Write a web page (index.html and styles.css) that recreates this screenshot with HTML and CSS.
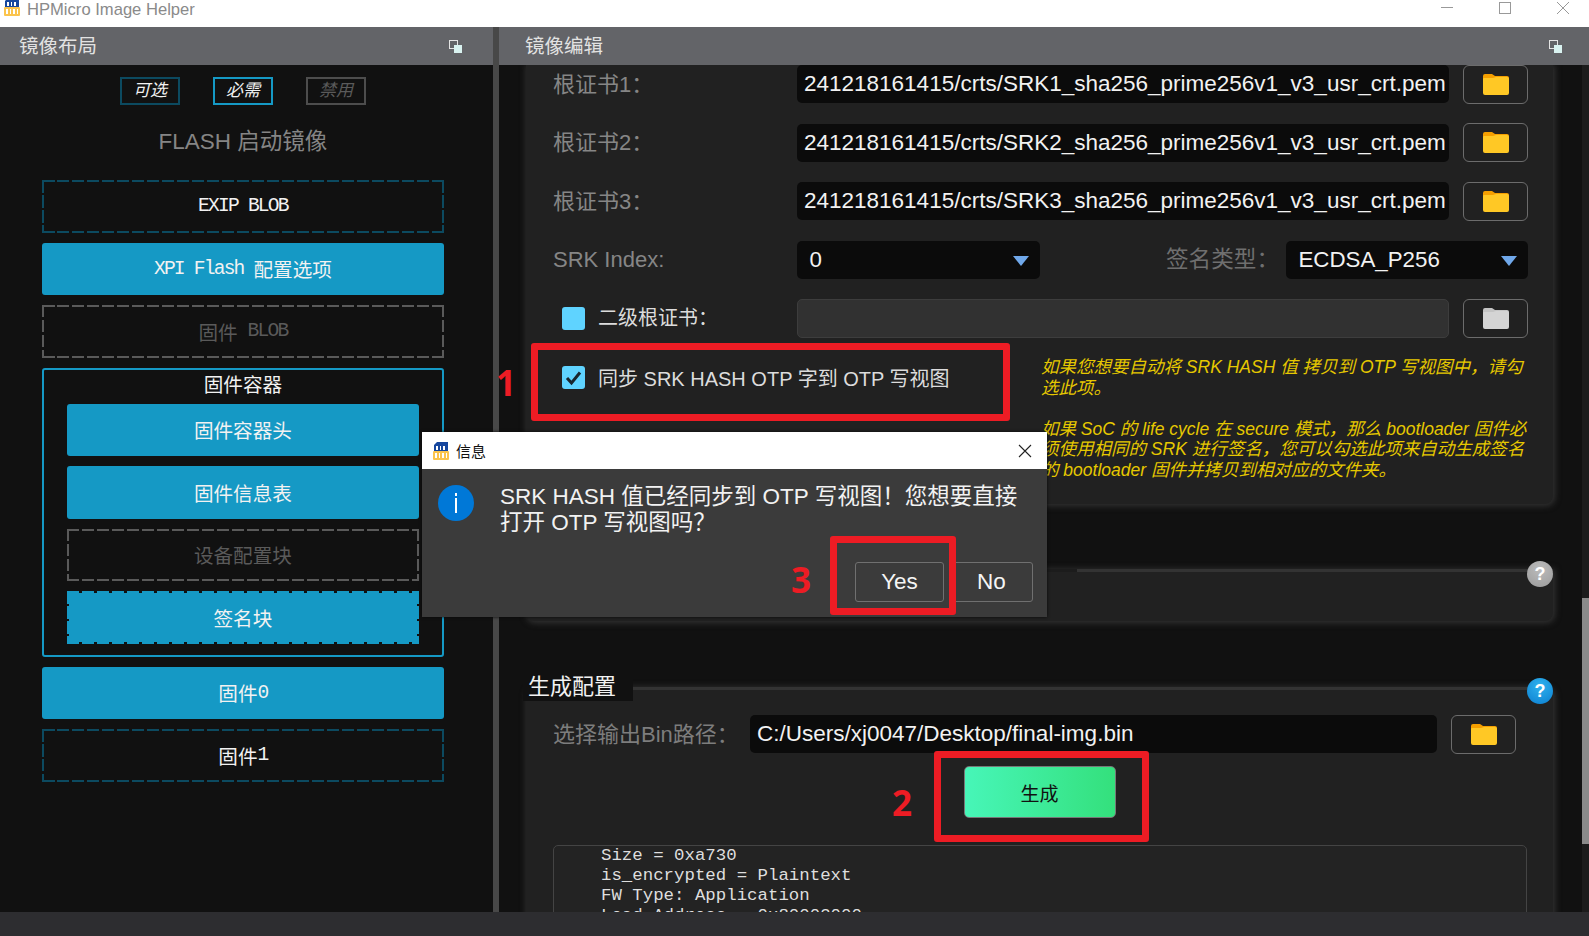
FILE: index.html
```html
<!DOCTYPE html>
<html lang="zh-CN">
<head>
    <meta charset="UTF-8">
    <meta name="viewport" content="width=device-width, initial-scale=1.0">
    <title>HPMicro Image Helper</title>
    <link rel="stylesheet" href="styles.css">
</head>
<body>
    <svg class="defs" width="0" height="0">
        <symbol id="folder" viewBox="0 0 26 21">
            <path fill="var(--folder-tab)" d="M0 2a2 2 0 0 1 2-2h7l3 2h12a2 2 0 0 1 2 2v8H0z"/>
            <path fill="var(--folder-body)" d="M0 5a1 1 0 0 1 1-1h9l3-1h11a2 2 0 0 1 2 2v14a2 2 0 0 1-2 2H2a2 2 0 0 1-2-2z"/>
        </symbol>
        <symbol id="app-logo" viewBox="0 0 16 18">
            <path fill="#17479e" d="M1 9V3l3-3h11v9z"/>
            <path fill="#fff" d="M3 4h2v4H3zm4 0h1v4H7zm3 0h2v4h-2z"/>
            <rect x="0" y="9" width="16" height="9" rx="1" fill="#fbc44d"/>
            <path fill="#fff" d="M2 11h2v5H2zm4 0h1v5H6zm3 0h2v5H9zm4 0h1v5h-1z"/>
        </symbol>
        <symbol id="float-icon" viewBox="0 0 13 13">
            <rect x="0.5" y="0.5" width="8" height="8" fill="none" stroke="#e4e4e4"/>
            <rect x="5" y="5" width="8" height="8" fill="#d9f2f0"/>
        </symbol>
        <symbol id="check" viewBox="0 0 23 23">
            <path fill="none" stroke="#18262e" stroke-width="3" d="M5 12l4.500 5L18 6.500"/>
        </symbol>
    </svg>

    <header class="titlebar">
        <svg class="app-logo"><use href="#app-logo"/></svg>
        <span class="app-name">HPMicro Image Helper</span>
        <div class="window-controls">
            <svg width="12" height="14" viewBox="0 0 12 14"><path d="M0 5.500h12" stroke="#999"/></svg>
            <svg width="12" height="14" viewBox="0 0 12 14"><rect x="0.500" y="0.500" width="11" height="11" fill="none" stroke="#999"/></svg>
            <svg width="12" height="14" viewBox="0 0 12 14"><path d="M0 0l12 12M12 0L0 12" stroke="#999"/></svg>
        </div>
    </header>

    <main class="workspace">
        <section class="layout-panel">
            <div class="panel-header">
                <span class="panel-title">镜像布局</span>
                <svg class="float-icon"><use href="#float-icon"/></svg>
            </div>
            <div class="layout-body">
                <div class="legend">
                    <span class="legend-item optional">可选</span>
                    <span class="legend-item required">必需</span>
                    <span class="legend-item disabled">禁用</span>
                </div>
                <h2 class="image-title">FLASH 启动镜像</h2>
                <div class="block-list">
                    <div class="block dashed"><span class="latin">EXIP BLOB</span></div>
                    <div class="block solid"><span class="latin">XPI Flash </span>配置选项</div>
                    <div class="block dashed off">固件<span class="latin"> BLOB</span></div>
                    <div class="container-block">
                        <div class="container-title">固件容器</div>
                        <div class="block-list">
                            <div class="block solid">固件容器头</div>
                            <div class="block solid">固件信息表</div>
                            <div class="block dashed off">设备配置块</div>
                            <div class="block dashed filled">签名块</div>
                        </div>
                    </div>
                    <div class="block solid">固件<span class="latin">0</span></div>
                    <div class="block dashed">固件<span class="latin">1</span></div>
                </div>
            </div>
        </section>

        <div class="splitter"></div>

        <section class="edit-panel">
            <div class="panel-header">
                <span class="panel-title">镜像编辑</span>
                <svg class="float-icon"><use href="#float-icon"/></svg>
            </div>
            <div class="edit-body">
                <div class="edit-scroll">
                    <div class="card srk-card">
                        <div class="row">
                            <label class="row-label">根证书1：</label>
                            <div class="field">241218161415/crts/SRK1_sha256_prime256v1_v3_usr_crt.pem</div>
                            <button class="folder-btn"><svg><use href="#folder"/></svg></button>
                        </div>
                        <div class="row">
                            <label class="row-label">根证书2：</label>
                            <div class="field">241218161415/crts/SRK2_sha256_prime256v1_v3_usr_crt.pem</div>
                            <button class="folder-btn"><svg><use href="#folder"/></svg></button>
                        </div>
                        <div class="row">
                            <label class="row-label">根证书3：</label>
                            <div class="field">241218161415/crts/SRK3_sha256_prime256v1_v3_usr_crt.pem</div>
                            <button class="folder-btn"><svg><use href="#folder"/></svg></button>
                        </div>
                        <div class="row">
                            <label class="row-label latin-label">SRK Index:</label>
                            <div class="combo srk-index">0</div>
                            <label class="sign-label">签名类型：</label>
                            <div class="combo sign-type">ECDSA_P256</div>
                        </div>
                        <div class="row">
                            <label class="row-label check-label"><span class="checkbox"></span>二级根证书：</label>
                            <div class="field field-off"></div>
                            <button class="folder-btn gray"><svg><use href="#folder"/></svg></button>
                        </div>
                        <div class="sync-row">
                            <label class="check-label sync-label">
                                <span class="checkbox"><svg><use href="#check"/></svg></span>同步 SRK HASH OTP 字到 OTP 写视图
                            </label>
                            <p class="note">如果您想要自动将 SRK HASH 值 拷贝到 OTP 写视图中，请勾<br>选此项。<br><br>如果 SoC 的 life cycle 在 secure 模式，那么 bootloader 固件必<br>须使用相同的 SRK 进行签名，您可以勾选此项来自动生成签名<br>的 bootloader 固件并拷贝到相对应的文件夹。</p>
                        </div>
                    </div>

                    <div class="card otp-card">
                        <span class="card-notch"></span>
                        <span class="help gray-help">?</span>
                    </div>

                    <div class="card output-card">
                        <h3 class="card-title">生成配置</h3>
                        <span class="help">?</span>
                        <div class="row output-row">
                            <label class="output-label">选择输出Bin路径：</label>
                            <div class="field">C:/Users/xj0047/Desktop/final-img.bin</div>
                            <button class="folder-btn"><svg><use href="#folder"/></svg></button>
                        </div>
                        <button class="generate-btn">生成</button>
                        <pre class="log">Size = 0xa730
is_encrypted = Plaintext
FW Type: Application
Load Address = 0x80003000</pre>
                    </div>
                </div>
                <div class="scrollbar"><div class="scroll-thumb"></div></div>
            </div>
        </section>
    </main>

    <footer class="statusbar"></footer>

    <!-- message box -->
    <div class="dialog">
        <div class="dialog-title">
            <svg class="dialog-logo"><use href="#app-logo"/></svg>
            <span>信息</span>
            <svg class="dialog-close" width="14" height="14" viewBox="0 0 14 14"><path d="M1 1l12 12M13 1L1 13" stroke="#222" stroke-width="1.100"/></svg>
        </div>
        <div class="dialog-body">
            <svg class="info-icon" width="36" height="36" viewBox="0 0 36 36">
                <circle cx="18" cy="18" r="18" fill="#0078d7"/>
                <rect x="17" y="8" width="2" height="3" fill="#fff"/>
                <rect x="17" y="13" width="2" height="15" fill="#fff"/>
            </svg>
            <p class="dialog-text">SRK HASH 值已经同步到 OTP 写视图！您想要直接<br>打开 OTP 写视图吗？</p>
        </div>
        <div class="dialog-actions">
            <button class="dialog-btn">Yes</button>
            <button class="dialog-btn no-btn">No</button>
        </div>
    </div>

    <!-- step markers -->
    <div class="step-box box-one"></div>
    <div class="step-box box-two"></div>
    <div class="step-box box-three"></div>
    <span class="step-num num-one">1</span>
    <span class="step-num num-two">2</span>
    <span class="step-num num-three">3</span>
</body>
</html>
```

FILE: styles.css
```css
* {
    box-sizing: border-box;
}

body {
    --folder-tab: #f59f00;
    --folder-body: #ffc825;
    position: relative;
    display: flex;
    flex-direction: column;
    width: 1589px;
    height: 936px;
    margin: 0;
    overflow: hidden;
    background-color: #111;
    font-family: "Liberation Sans", "Noto Sans CJK SC", sans-serif;
    color: #f2f2f2;
}

.defs {
    position: absolute;
}

/* title bar */
.titlebar {
    display: flex;
    align-items: flex-start;
    flex: none;
    height: 27px;
    background-color: #fff;
    overflow: hidden;
}

.app-logo {
    width: 16px;
    height: 18px;
    margin: -2px 0 0 4px;
}

.app-name {
    margin-left: 7px;
    font-size: 16.600px;
    line-height: 20px;
    color: #8a8a8a;
}

.window-controls {
    display: flex;
    gap: 46px;
    margin: 2px 20px 0 auto;
}

/* panels */
.workspace {
    display: flex;
    flex: 1;
    min-height: 0;
}

.panel-header {
    display: flex;
    justify-content: space-between;
    align-items: center;
    height: 38px;
    background-color: #636468;
    font-size: 19.500px;
    color: #e2e2e2;
}

.panel-title {
    margin-top: -4px;
}

.float-icon {
    width: 13px;
    height: 13px;
}

.layout-panel {
    flex: none;
    width: 493px;
}

.layout-panel .panel-header {
    padding: 0 31px 0 19px;
}

.splitter {
    flex: none;
    width: 6px;
    background-color: #484848;
}

.layout-body {
    padding: 12px 48.700px 0 41.500px;
}

.legend {
    display: flex;
    justify-content: center;
    gap: 33px;
}

.legend-item {
    width: 60px;
    height: 28px;
    border: 2px solid #0c4a60;
    font-size: 17px;
    font-style: italic;
    line-height: 23px;
    text-align: center;
}

.legend-item.required {
    border-color: #1599c5;
}

.legend-item.disabled {
    border-color: #4d4d4d;
    color: #5a5a5a;
}

.image-title {
    margin: 21px 0 22px;
    font-size: 22.500px;
    font-weight: 400;
    line-height: 32px;
    text-align: center;
    color: #858585;
}

.block-list {
    display: flex;
    flex-direction: column;
    gap: 10px;
}

.block {
    display: flex;
    justify-content: center;
    align-items: center;
    height: 52.500px;
    font-family: "Liberation Mono", "Noto Sans CJK SC", monospace;
    font-size: 19.600px;
    white-space: pre;
}

.latin {
    letter-spacing: -1.800px;
}

.block.solid {
    background-color: #1599c5;
    border-radius: 3px;
}

/* long dashes, drawn edge by edge */
.block.dashed {
    --dash: #0c4a60;
    --fill: transparent;
    background:
        repeating-linear-gradient(90deg, var(--dash) 0 12.500px, transparent 12.500px 15px) 0 0 / 100% 2px no-repeat,
        repeating-linear-gradient(90deg, var(--dash) 0 12.500px, transparent 12.500px 15px) 0 100% / 100% 2px no-repeat,
        repeating-linear-gradient(180deg, var(--dash) 0 12.500px, transparent 12.500px 15px) 0 0 / 2px 100% no-repeat,
        repeating-linear-gradient(180deg, var(--dash) 0 12.500px, transparent 12.500px 15px) 100% 0 / 2px 100% no-repeat,
        linear-gradient(var(--fill), var(--fill)) 2px 2px / calc(100% - 4px) calc(100% - 4px) no-repeat;
}

.block.dashed.off {
    --dash: #5a5a5a;
    color: #5a5a5a;
}

.block.dashed.filled {
    --dash: #1599c5;
    --fill: #1599c5;
}

.container-block {
    padding: 0 23px 11px;
    border: 2px solid #1599c5;
    border-radius: 3px;
}

.container-title {
    margin-bottom: 4px;
    font-size: 19.600px;
    line-height: 30px;
    text-align: center;
}

/* edit panel */
.edit-panel {
    display: flex;
    flex-direction: column;
    flex: 1;
    min-width: 0;
}

.edit-panel .panel-header {
    flex: none;
    padding: 0 27px 0 26px;
}

.edit-body {
    display: flex;
    flex: 1;
    min-height: 0;
    overflow: hidden;
}

.edit-scroll {
    flex: 1;
    min-width: 0;
    padding: 0 29px 0 27px;
}

.scrollbar {
    flex: none;
    width: 7px;
    background-color: #1c1c1c;
}

.scroll-thumb {
    height: 246px;
    margin-top: 533px;
    background-color: #8a8a8a;
}

.card {
    position: relative;
    background-color: #212121;
    border-radius: 0 0 8px 8px;
    box-shadow: 1px 1px 6px 1px #333;
}

.srk-card {
    padding: 0 25px 24px 27px;
    border-radius: 0 0 8px 8px;
}

.row {
    display: flex;
    align-items: center;
    gap: 14px;
    height: 38px;
    margin-bottom: 20.500px;
}

.row-label {
    flex: none;
    width: 230px;
    margin-top: -5px;
    font-size: 22px;
    color: #868686;
}

.row-label.latin-label {
    margin-top: 0;
}

.field {
    flex: 1;
    min-width: 0;
    height: 38px;
    padding-left: 7px;
    background-color: #0b0b0b;
    border-radius: 5px;
    font-size: 22.500px;
    line-height: 37px;
    white-space: nowrap;
    overflow: hidden;
}

.field-off {
    height: 39px;
    background-color: #313131;
    border: 1px solid #3d3d3d;
}

.folder-btn {
    display: flex;
    justify-content: center;
    align-items: center;
    flex: none;
    width: 65px;
    height: 39px;
    padding: 0;
    background: transparent;
    border: 1.500px solid #6c6c6c;
    border-radius: 6px;
}

.folder-btn svg {
    width: 26px;
    height: 21px;
}

.folder-btn.gray {
    --folder-tab: #c4c4c4;
    --folder-body: #d4d4d4;
}

.combo {
    position: relative;
    flex: none;
    height: 38px;
    padding-left: 12.500px;
    background-color: #0b0b0b;
    border-radius: 5px;
    font-size: 22.300px;
    line-height: 38px;
}

.combo::after {
    content: "";
    position: absolute;
    top: 15px;
    right: 11px;
    border-style: solid;
    border-width: 10px 8.500px 0;
    border-color: #70a8ea transparent transparent;
}

.srk-index {
    width: 243px;
}

.sign-label {
    margin: -4px -7px 0 auto;
    font-size: 22.600px;
    color: #6f6f6f;
}

.sign-type {
    width: 242px;
}

.check-label {
    display: flex;
    align-items: center;
    gap: 13px;
    padding-left: 9px;
    font-size: 20px;
    color: #dcdcdc;
}

.row-label.check-label {
    margin-top: 0;
    line-height: 28px;
}

.checkbox {
    flex: none;
    width: 23px;
    height: 23px;
    background-color: #5fd3ff;
    border-radius: 3px;
}

.checkbox svg {
    display: block;
    width: 23px;
    height: 23px;
}

.sync-row {
    display: flex;
    margin-top: -1.500px;
}

.sync-label {
    align-items: flex-start;
    flex: none;
    width: 488px;
    padding-top: 10px;
    line-height: 27px;
}

.note {
    min-width: 0;
    margin: 1px 0 0;
    font-size: 17.500px;
    font-style: italic;
    line-height: 20.500px;
    white-space: nowrap;
    color: #e6c800;
}

.otp-card {
    height: 52px;
    margin-top: 65px;
    border-top: 3px solid #333;
}

.card-notch {
    position: absolute;
    top: -3px;
    left: 0;
    width: 551px;
    height: 3px;
    background-color: #1c1c1c;
}

.help {
    position: absolute;
    top: -10px;
    right: 0;
    width: 26px;
    height: 26px;
    background: radial-gradient(circle at 50% 30%, #2fb2ee, #0c7fd0);
    border-radius: 50%;
    font-size: 18px;
    font-weight: 700;
    line-height: 26px;
    text-align: center;
    color: #fff;
}

.gray-help {
    top: -11px;
    background: radial-gradient(circle at 50% 30%, #bcbcbc, #9b9b9b);
}

.output-card {
    height: 300px;
    margin-top: 66px;
    padding: 25px 37px 0 27px;
    border-top: 3px solid #333;
    border-radius: 8px 8px 0 0;
}

.output-card .help {
    top: -12px;
}

.card-title {
    position: absolute;
    top: -13px;
    left: -3px;
    width: 110px;
    height: 24px;
    margin: 0;
    padding-left: 5px;
    background-color: #111;
    font-size: 22px;
    font-weight: 400;
    line-height: 20px;
    color: #f2f2f2;
}

.output-row {
    margin-bottom: 13px;
}

.output-label {
    flex: none;
    width: 183px;
    margin-top: -5px;
    font-size: 22px;
    white-space: nowrap;
    color: #7d7d7d;
}

.generate-btn {
    position: relative;
    left: 5px;
    display: block;
    width: 152px;
    height: 52px;
    margin: 0 auto 27px;
    background: linear-gradient(90deg, #47f6b8, #34e07c);
    border: 1.500px solid #777;
    border-radius: 5px;
    font-family: inherit;
    font-size: 19px;
    color: #111;
}

.log {
    height: 120px;
    margin: 0 -11px 0 0;
    padding-left: 47px;
    background-color: #232323;
    border: 1px solid #444;
    border-radius: 5px 5px 0 0;
    font-family: "Liberation Mono", monospace;
    font-size: 17.400px;
    line-height: 20px;
    color: #dedede;
}

.statusbar {
    flex: none;
    height: 24px;
    background-color: #2d2d30;
}

/* message box */
.dialog {
    position: absolute;
    top: 432px;
    left: 422px;
    width: 625px;
    height: 185px;
    background-color: #3b3b3b;
    box-shadow: 0 0 3px #0a0a0a;
}

.dialog-title {
    display: flex;
    align-items: center;
    height: 37px;
    padding: 0 15px 0 11px;
    background-color: #fff;
    font-size: 15px;
    color: #111;
}

.dialog-logo {
    width: 16px;
    height: 18px;
    margin-right: 7px;
}

.dialog-close {
    margin-left: auto;
}

.dialog-body {
    display: flex;
    align-items: flex-start;
    gap: 26px;
    padding: 16px 0 0 16px;
}

.dialog-text {
    margin: -1px 0 0;
    font-size: 22.500px;
    line-height: 26px;
    white-space: nowrap;
}

.dialog-actions {
    position: absolute;
    right: 14px;
    bottom: 15px;
    display: flex;
    gap: 6px;
}

.dialog-btn {
    width: 89px;
    height: 40px;
    padding: 0;
    background-color: #3b3b3b;
    border: 1px solid #707070;
    border-radius: 3px;
    font-family: inherit;
    font-size: 22.500px;
    color: #f5f5f5;
}

.no-btn {
    width: 83px;
}

/* step markers */
.step-box {
    position: absolute;
    border: 7px solid #ed1c24;
    border-radius: 3px;
}

.box-one {
    top: 343px;
    left: 531px;
    width: 479px;
    height: 78px;
}

.box-two {
    top: 751px;
    left: 934px;
    width: 215px;
    height: 91px;
}

.box-three {
    top: 536px;
    left: 830px;
    width: 126px;
    height: 79px;
}

.step-num {
    position: absolute;
    font-family: "Open Sans", "Liberation Sans", sans-serif;
    font-size: 35px;
    font-weight: 700;
    line-height: 36px;
    color: #ed1c24;
}

.num-one {
    top: 365px;
    left: 496px;
}

.num-two {
    top: 785px;
    left: 892px;
}

.num-three {
    top: 562px;
    left: 791px;
}
```
